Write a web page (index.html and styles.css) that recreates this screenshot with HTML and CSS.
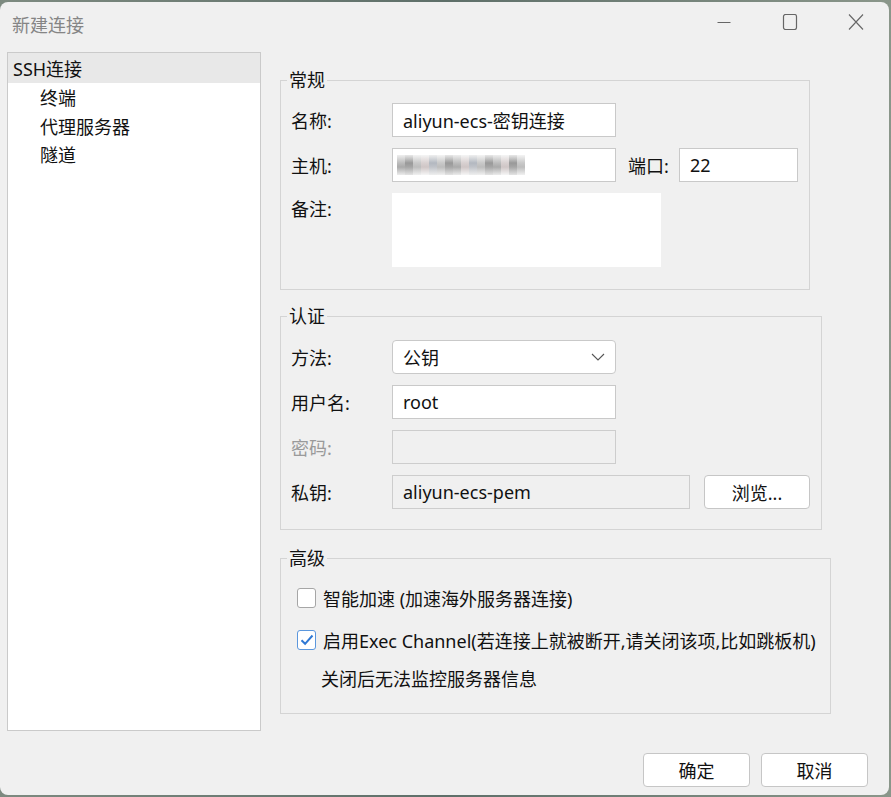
FILE: index.html
```html
<!DOCTYPE html>
<html lang="zh-CN">
<head>
    <meta charset="UTF-8">
    <title>新建连接</title>
    <link rel="stylesheet" href="styles.css">
</head>
<body>
    <div class="window">
        <div class="titlebar">
            <span class="title">新建连接</span>
            <div class="controls">
                <span class="ctl">
                    <svg width="16" height="16" viewBox="0 0 16 16"><path d="M1.5 8.5h13" stroke="#666" stroke-width="1" fill="none"/></svg>
                </span>
                <span class="ctl">
                    <svg width="16" height="16" viewBox="0 0 16 16"><rect x="1.5" y="0.5" width="13" height="15" rx="2" stroke="#666" stroke-width="1.2" fill="none"/></svg>
                </span>
                <span class="ctl">
                    <svg width="16" height="16" viewBox="0 0 16 16"><path d="M1 0.5l14 15M15 0.5l-14 15" stroke="#666" stroke-width="1.1" fill="none"/></svg>
                </span>
            </div>
        </div>

        <div class="content">
            <ul class="tree">
                <li class="selected">SSH连接</li>
                <li class="child">终端</li>
                <li class="child">代理服务器</li>
                <li class="child">隧道</li>
            </ul>

            <div class="panel">
                <fieldset class="group general">
                    <legend>常规</legend>
                    <div class="fields">
                        <div class="row">
                            <label>名称:</label>
                            <div class="input">aliyun-ecs-密钥连接</div>
                        </div>
                        <div class="row">
                            <label>主机:</label>
                            <div class="input">
                                <div class="mosaic">
                                    <span class="m1"></span><span class="m3"></span><span class="m2"></span><span class="m4"></span>
                                    <span class="m5"></span><span class="m2"></span><span class="m3"></span><span class="m1"></span>
                                    <span class="m4"></span><span class="m5"></span><span class="m2"></span><span class="m3"></span>
                                    <span class="m1"></span><span class="m4"></span><span class="m3"></span><span class="m2"></span>
                                </div>
                            </div>
                            <label class="port-label">端口:</label>
                            <div class="input port">22</div>
                        </div>
                        <div class="row top">
                            <label>备注:</label>
                            <div class="memo"></div>
                        </div>
                    </div>
                </fieldset>

                <fieldset class="group auth">
                    <legend>认证</legend>
                    <div class="fields">
                        <div class="row">
                            <label>方法:</label>
                            <div class="input select">
                                <span>公钥</span>
                                <svg width="14" height="8" viewBox="0 0 14 8"><path d="M1 1l6 6 6-6" stroke="#555" stroke-width="1.1" fill="none"/></svg>
                            </div>
                        </div>
                        <div class="row">
                            <label>用户名:</label>
                            <div class="input">root</div>
                        </div>
                        <div class="row">
                            <label class="disabled">密码:</label>
                            <div class="input readonly"></div>
                        </div>
                        <div class="row">
                            <label>私钥:</label>
                            <div class="input readonly key">aliyun-ecs-pem</div>
                            <button class="btn browse">浏览...</button>
                        </div>
                    </div>
                </fieldset>

                <fieldset class="group advanced">
                    <legend>高级</legend>
                    <div class="checks">
                        <div class="check">
                            <span class="box"></span>
                            <span>智能加速 (加速海外服务器连接)</span>
                        </div>
                        <div class="check">
                            <span class="box checked">
                                <svg width="14" height="12" viewBox="0 0 14 12"><path d="M1.5 6.2l3.6 3.6 7.4-8.3" stroke="#2f78d4" stroke-width="2" fill="none"/></svg>
                            </span>
                            <span>启用Exec Channel(若连接上就被断开,请关闭该项,比如跳板机)</span>
                        </div>
                        <div class="note">关闭后无法监控服务器信息</div>
                    </div>
                </fieldset>
            </div>
        </div>

        <div class="footer">
            <button class="btn">确定</button>
            <button class="btn">取消</button>
        </div>
    </div>
</body>
</html>
```

FILE: styles.css
```css
* {
    margin: 0;
    padding: 0;
    box-sizing: border-box;
}

body {
    width: 891px;
    height: 797px;
    overflow: hidden;
    background: linear-gradient(90deg, #7d8a80 0%, #5e6f69 50%, #8a968a 100%);
    font-family: "Noto Sans", "Noto Sans CJK SC", sans-serif;
    font-size: 18px;
    color: #111;
}

.window {
    margin-top: 2px;
    width: 889px;
    height: 793px;
    background: #f0f0f0;
    border-radius: 8px;
    display: flex;
    flex-direction: column;
}

.titlebar {
    height: 50px;
    display: flex;
    align-items: flex-start;
}

.title {
    padding: 12px 0 0 12px;
    color: #858585;
    font-size: 18px;
    line-height: 22px;
}

.controls {
    margin-left: auto;
    display: flex;
}

.ctl {
    width: 66px;
    height: 40px;
    display: flex;
    align-items: center;
    justify-content: center;
}

.content {
    display: flex;
    padding-left: 7px;
    height: 679px;
}

.tree {
    width: 254px;
    height: 679px;
    list-style: none;
    background: #fff;
    border: 1px solid #cacaca;
}

.tree li {
    height: 28.6px;
    line-height: 31px;
    padding-left: 5px;
    white-space: nowrap;
}

.tree li.selected {
    height: 30px;
    line-height: 33px;
    background: #e8e8e8;
}

.tree li.child {
    padding-left: 32px;
}

.panel {
    padding: 18px 0 0 19px;
}

.group {
    border: 1px solid #d4d4d4;
    padding: 13px 0 22px 10px;
}

.group legend {
    margin-left: -4px;
    padding: 0 2px;
    font-size: 18px;
    line-height: 20px;
}

.general { width: 530px; }
.auth { width: 542px; margin-top: 16px; padding-top: 14px; padding-bottom: 20px; }
.advanced { width: 551px; margin-top: 18px; padding-bottom: 17px; }

.fields {
    display: flex;
    flex-direction: column;
    gap: 11px;
}

.row {
    display: flex;
    align-items: center;
}

.row.top {
    align-items: flex-start;
}

.row label {
    width: 101px;
}

.row.top label {
    padding-top: 2px;
}

.row label.disabled {
    color: #9a9a9a;
}

.input {
    width: 224px;
    height: 34px;
    background: #fff;
    border: 1px solid #c9c9c9;
    padding-left: 10px;
    display: flex;
    align-items: center;
    white-space: nowrap;
}

.input.readonly {
    background: #f0f0f0;
    border-color: #cdcdcd;
}

.input.key {
    width: 298px;
}

.input.select {
    border-radius: 4px;
    justify-content: space-between;
    padding-right: 10px;
}

.port-label {
    margin-left: 12px;
    width: 51px !important;
}

.input.port {
    width: 119px;
}

.memo {
    width: 269px;
    height: 74px;
    background: #fff;
}

.mosaic {
    display: flex;
    height: 20px;
    margin-left: -6px;
}

.mosaic span {
    width: 8px;
    height: 100%;
}

.mosaic .m1 { background: linear-gradient(#eee, #bbb 40%, #aaa 60%, #ececec); }
.mosaic .m2 { background: linear-gradient(#f4f4f4, #c8c8c8 40%, #bdbdbd 60%, #f1f1f1); }
.mosaic .m3 { background: linear-gradient(#e8e8e8, #999 40%, #a6a6a6 60%, #e4e4e4); }
.mosaic .m4 { background: linear-gradient(#f5f5f5, #d8d0d0 40%, #cfc6c6 60%, #f6f6f6); }
.mosaic .m5 { background: linear-gradient(#efefef, #b3b8c0 40%, #c0c3c9 60%, #efefef); }

.btn {
    width: 107px;
    height: 34px;
    background: #fff;
    border: 1px solid #c6c6c6;
    border-radius: 4px;
    font-family: inherit;
    font-size: 18px;
    color: #111;
}

.btn.browse {
    width: 106px;
    margin-left: 14px;
}

.checks {
    display: flex;
    flex-direction: column;
    gap: 8px;
}

.check {
    display: flex;
    align-items: center;
    height: 34px;
    gap: 7px;
    padding-left: 6px;
}

.box {
    width: 19px;
    height: 20px;
    border: 1px solid #a6a6a6;
    border-radius: 3px;
    background: #fff;
    display: flex;
    align-items: center;
    justify-content: center;
}

.box.checked {
    border-color: #5b97dd;
}

.note {
    height: 34px;
    line-height: 34px;
    padding-left: 30px;
    margin-top: -3px;
}

.footer {
    display: flex;
    justify-content: flex-end;
    gap: 11px;
    padding: 22px 21px 0 0;
}
```
